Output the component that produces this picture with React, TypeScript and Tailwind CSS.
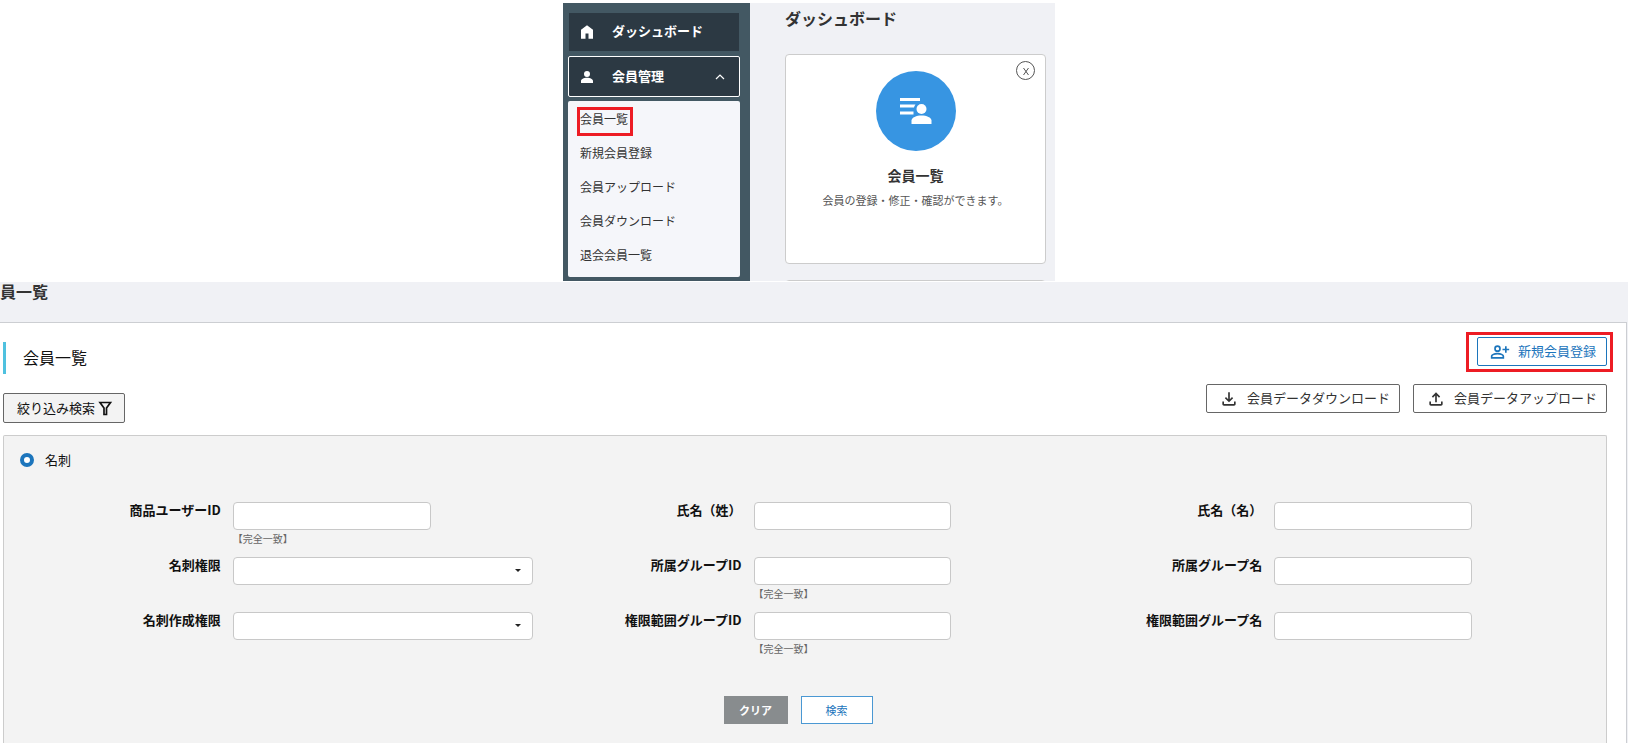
import React, { useState } from 'react';

const menuItems = ['会員一覧', '新規会員登録', '会員アップロード', '会員ダウンロード', '退会会員一覧'];

type FieldProps = {
  id: string;
  label: string;
  type?: 'text' | 'select';
  hint?: string;
};

const fields: FieldProps[] = [
  { id: 'user-id', label: '商品ユーザーID', hint: '【完全一致】' },
  { id: 'last-name', label: '氏名（姓）' },
  { id: 'first-name', label: '氏名（名）' },
  { id: 'card-role', label: '名刺権限', type: 'select' },
  { id: 'group-id', label: '所属グループID', hint: '【完全一致】' },
  { id: 'group-name', label: '所属グループ名' },
  { id: 'card-create-role', label: '名刺作成権限', type: 'select' },
  { id: 'scope-group-id', label: '権限範囲グループID', hint: '【完全一致】' },
  { id: 'scope-group-name', label: '権限範囲グループ名' }
];

const Icon = ({ d, className }: { d: string, className: string }) => (
  <svg viewBox="0 0 24 24" fill="currentColor" className={className} aria-hidden="true">
    <path d={d} />
  </svg>
);

const icons = {
  home: 'M4 21V9l8-6 8 6v12h-6v-7h-4v7z',
  person: 'M12 12a4 4 0 1 0 0-8 4 4 0 0 0 0 8zm-8 8v-2.800c0-2 3.500-4.200 8-4.200s8 2.200 8 4.200V20z',
  personAdd: 'M9 12a4 4 0 1 1 0-8 4 4 0 0 1 0 8zm0-2a2 2 0 1 0 0-4 2 2 0 0 0 0 4zM1 20v-2.800C1 14.500 5.500 13 9 13s8 1.500 8 4.200V20zm2-2h12v-.8C15 16 12 15 9 15s-6 1-6 2.200zM18 13v-3h-3V8h3V5h2v3h3v2h-3v3z',
  download: 'M12 16l-5-5 1.400-1.450 2.600 2.600V4h2v8.150l2.600-2.600L17 11zm-6 4c-1.100 0-2-.9-2-2v-3h2v3h12v-3h2v3c0 1.100-.9 2-2 2z',
  upload: 'M11 16V7.850l-2.600 2.600L7 9l5-5 5 5-1.400 1.450-2.600-2.600V16zm-5 4c-1.100 0-2-.9-2-2v-3h2v3h12v-3h2v3c0 1.100-.9 2-2 2z'
};

const Field = ({ id, label, type = 'text', hint }: FieldProps) => (
  <div className="flex gap-[11px] h-[55px]">
    <label htmlFor={id} className="w-[38%] h-4 pr-px text-right text-[13px] leading-4 font-bold">
      {label}
    </label>
    <div className="flex-1 pr-3">
      {type === 'select' ? (
        <div className="relative">
          <select id={id} className="block w-full h-7 appearance-none rounded border border-[#c8c8c8] bg-white" />
          <span className="pointer-events-none absolute right-3 top-3 border-x-3 border-t-3 border-x-transparent border-t-[#222]" />
        </div>
      ) : (
        <input id={id} type="text" className="block w-[66%] h-7 rounded border border-[#c8c8c8] bg-white" />
      )}
      {hint && <p className="pt-[3px] text-[10px] leading-3 text-[#666]">{hint}</p>}
    </div>
  </div>
);

const Dashboard = () => (
  <section className="mx-auto mt-[3px] flex h-[278px] w-[492px] overflow-hidden bg-[#f0f1f5]">
    {/* Sidebar */}
    <nav className="w-[187px] shrink-0 bg-[#435863] px-[5px] pt-[10px]">
      <a href="#" className="mx-px flex h-[38px] w-[170px] items-center bg-[#2c3943] pl-[9px] text-white">
        <Icon d={icons.home} className="size-[18px]" />
        <span className="pb-0.5 pl-4 text-[13px] font-bold">ダッシュボード</span>
      </a>
      <button type="button" className="mt-[5px] flex h-[41px] w-[172px] items-center rounded-xs border border-white bg-[#2c3943] pl-[9px] pr-[14px] text-white">
        <Icon d={icons.person} className="size-[18px]" />
        <span className="flex-1 pb-0.5 pl-4 text-left text-[13px] font-bold">会員管理</span>
        <svg viewBox="0 0 10 6" className="h-1.5 w-2.5" fill="none" stroke="currentColor" strokeWidth="1.2" aria-hidden="true">
          <path d="M1 5l4-4 4 4" />
        </svg>
      </button>
      <ul className="mt-1 h-[176px] w-[172px] rounded-xs bg-[#f5f6fa] pt-px">
        {menuItems.map((item, i) => (
          <li key={item} className="relative h-[34px] pl-3 text-xs leading-[34px] text-[#333]">
            <a href="#">{item}</a>
            {i === 0 && <span className="pointer-events-none absolute left-[9px] top-[5px] h-[29px] w-14 border-3 border-[#ed1c24]" />}
          </li>
        ))}
      </ul>
    </nav>

    {/* Cards */}
    <div className="flex-1 pl-[35px] pr-[9px] pt-[3px]">
      <h1 className="text-base leading-6 font-bold text-[#333]">ダッシュボード</h1>
      <div className="relative mt-6 flex h-[210px] flex-col items-center rounded-sm border border-[#ccc] bg-white pt-4">
        <button type="button" aria-label="閉じる" className="absolute right-[10px] top-[6px] flex size-[19px] items-center justify-center rounded-full border border-[#555] text-[#555]">
          <svg viewBox="0 0 6 8" className="h-2 w-1.5" fill="none" stroke="currentColor" aria-hidden="true">
            <path d="M.5 1l5 7M5.500 1l-5 7" />
          </svg>
        </button>
        <div className="flex size-20 items-center justify-center rounded-full bg-[#3795e2] text-white">
          <svg viewBox="0 0 32 28" className="h-7 w-8" fill="currentColor" aria-hidden="true">
            <path d="M0 1h20v3H0zM0 7.500h15.500a6 6 0 0 0-1.500 3H0zM0 14.500h13.500v3H0z" />
            <circle cx="21.500" cy="12" r="5" />
            <path d="M11.500 27v-3.500c0-3 5-5 10-5s10 2 10 5V27z" />
          </svg>
        </div>
        <h2 className="pt-[14px] text-sm leading-5 font-bold text-[#333]">会員一覧</h2>
        <p className="pt-[5px] text-[11px] leading-5 text-[#555]">会員の登録・修正・確認ができます。</p>
      </div>
      <div className="mt-4 h-5 rounded-sm border border-[#ccc] bg-white" />
    </div>
  </section>
);

const MemberList = () => {
  const [kind, setKind] = useState('card');

  return (
    <main className="mr-[22px] mt-px flex flex-1 flex-col bg-[#f0f1f5]">
      <h1 className="h-10 text-base leading-[18px] font-bold text-[#333]">員一覧</h1>
      <div className="mr-px flex flex-1 flex-col border-t border-r border-[#ccced2] bg-white pl-[3px] pr-[19px]">
        <div className="flex items-start justify-between">
          <div className="pt-[19px]">
            <h2 className="border-l-3 border-[#4fc1df] pb-0.5 pl-[17px] text-base leading-[30px]">会員一覧</h2>
            <button type="button" className="mt-[19px] flex h-[30px] items-center gap-0.5 rounded-xs border border-[#666] bg-[#f3f3f3] pl-[13px] pr-[11px] text-[13px]">
              <span className="pb-px">絞り込み検索</span>
              <svg viewBox="0 0 16 16" className="size-4" fill="none" stroke="currentColor" strokeWidth="1.700" aria-hidden="true">
                <path d="M3 2.500h10.500L9.500 8v6.500H7V8z" />
              </svg>
            </button>
          </div>
          <div className="flex flex-col items-end gap-[18px] pt-[14px]">
            <button type="button" className="relative flex h-[29px] items-center gap-2 rounded-xs border border-[#1c75bc] bg-white pl-3 pr-[10px] text-[13px] text-[#1c75bc]">
              <Icon d={icons.personAdd} className="size-5" />
              <span className="pb-0.5">新規会員登録</span>
              <span className="pointer-events-none absolute -left-3 -right-[7px] -top-[6px] -bottom-[7px] border-3 border-[#ed1c24]" />
            </button>
            <div className="flex gap-[13px]">
              <button type="button" className="flex h-[29px] items-center gap-2 rounded-xs border border-[#666] bg-white pl-3 pr-[9px] text-[13px] text-[#333]">
                <Icon d={icons.download} className="size-5" />
                <span className="pb-0.5">会員データダウンロード</span>
              </button>
              <button type="button" className="flex h-[29px] items-center gap-2 rounded-xs border border-[#666] bg-white pl-3 pr-[9px] text-[13px] text-[#333]">
                <Icon d={icons.upload} className="size-5" />
                <span className="pb-0.5">会員データアップロード</span>
              </button>
            </div>
          </div>
        </div>

        {/* Search form */}
        <form className="mt-3 flex-1 rounded-t-xs border border-b-0 border-[#ccc] bg-[#f3f3f3] px-5 pt-4" onSubmit={e => e.preventDefault()}>
          <label className="-ml-1 flex h-4 items-center gap-[11px] text-[13px]">
            <input
              type="radio"
              name="kind"
              checked={kind === 'card'}
              onChange={() => setKind('card')}
              className="size-3.5 appearance-none rounded-full border-4 border-[#1c75bc] bg-white"
            />
            名刺
          </label>
          <div className="grid grid-cols-3 pt-[34px]">
            {fields.map(field => (
              <Field key={field.id} {...field} />
            ))}
          </div>
          <div className="flex justify-center gap-[13px] pt-[29px] pr-[14px]">
            <button type="reset" className="h-7 w-16 bg-[#888c8e] text-[11px] font-bold text-white">クリア</button>
            <button type="submit" className="h-7 w-[72px] border border-[#4a98d3] bg-white text-[11px] text-[#1c75bc]">検索</button>
          </div>
        </form>
      </div>
    </main>
  );
};

const App: React.FC = () => (
  <div className="flex min-h-screen flex-col bg-white font-['Noto_Sans_CJK_JP',sans-serif] text-[#111]">
    <div className="pr-8">
      <Dashboard />
    </div>
    <MemberList />
  </div>
);

export default App;
